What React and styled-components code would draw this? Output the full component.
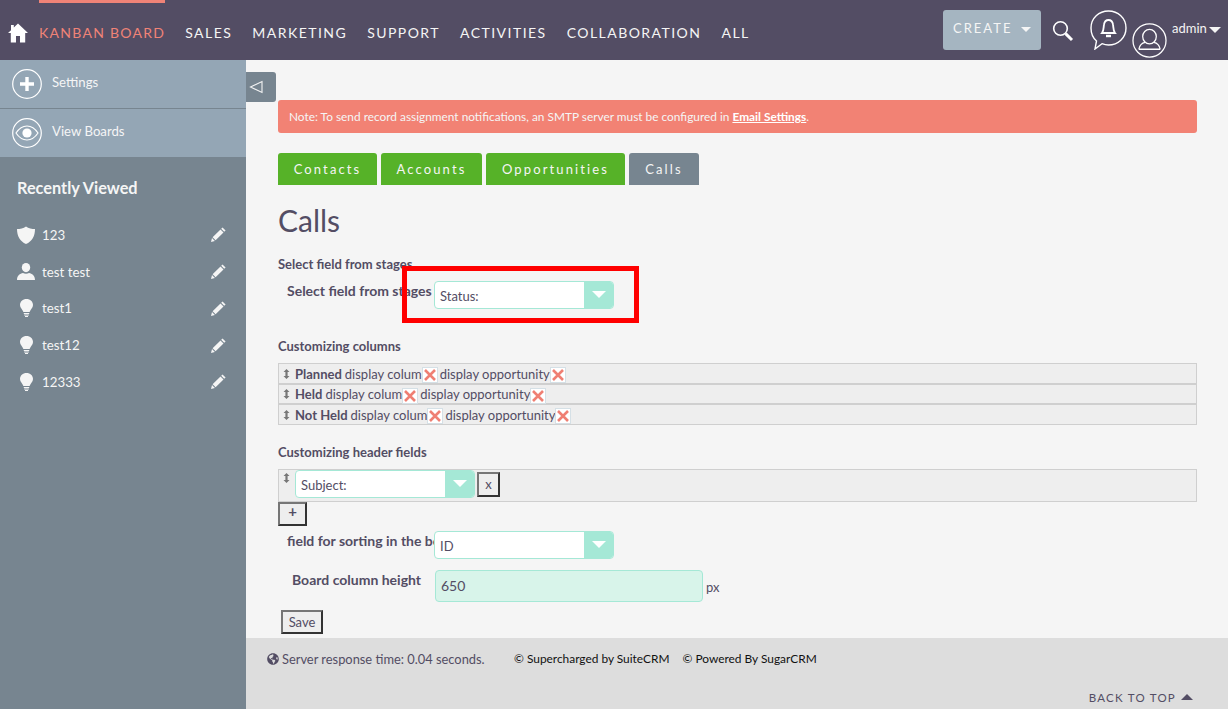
import React from 'react'
import styled, { createGlobalStyle } from 'styled-components'
import { FaGlobeAmericas } from 'react-icons/fa'

const GlobalStyle = createGlobalStyle`
html, body { margin: 0; padding: 0; height: 100%; overflow: hidden; }
body { font-family: Lato, "Open Sans", sans-serif; background: #f5f5f5; color: #534d64; }
* { box-sizing: border-box; }
`

const Page = styled.div`
display: flex;
flex-direction: column;
width: 1228px;
height: 709px;
overflow: hidden;
`

/* top bar */
const Header = styled.header`
flex: 0 0 60px;
display: flex;
align-items: flex-start;
background: #534d64;
position: relative;
`
const HomeLink = styled.a`
width: 39px;
height: 60px;
display: flex;
padding: 23px 0 0 8px;
`
const NavList = styled.nav`
display: flex;
height: 60px;
gap: 20px;
`
const NavItem = styled.a`
height: 60px;
font-size: 14px;
line-height: 17px;
letter-spacing: ${p => (p.$active ? '1.27px' : '1.46px')};
white-space: nowrap;
color: ${p => (p.$active ? '#f08377' : '#f5f5f5')};
border-top: ${p => (p.$active ? '3px solid #f08377' : '0')};
padding-top: ${p => (p.$active ? '21px' : '24px')};
`
const HeaderRight = styled.div`
margin-left: auto;
display: flex;
align-items: flex-start;
padding-top: 10px;
width: 285px;
`
const CreateButton = styled.button`
width: 98px;
height: 40px;
border: 0;
border-radius: 3px;
background: #a5b5c1;
color: #f5f5f5;
font-family: inherit;
font-size: 13px;
letter-spacing: 2px;
display: flex;
align-items: center;
padding: 0 0 4px 10px;
gap: 9px;
`
const SearchIcon = styled.svg`
margin: 10px 0 0 11px;
`
const BellIcon = styled.svg`
margin: 0 0 0 16px;
`
const UserIcon = styled.svg`
margin: 13px 0 0 5px;
`
const AdminLabel = styled.span`
margin: 10px 0 0 5px;
font-size: 13px;
line-height: 17px;
color: #f5f5f5;
display: flex;
align-items: center;
gap: 2px;
`
const Caret = styled.i`
display: inline-block;
width: 0;
height: 0;
margin-top: ${p => p.$top || 0}px;
border-left: ${p => p.$size || 5}px solid transparent;
border-right: ${p => p.$size || 5}px solid transparent;
border-top: ${p => p.$size || 5}px solid ${p => p.$color || '#f5f5f5'};
`

/* body */
const Body = styled.div`
flex: 1;
display: flex;
min-height: 0;
`
const Sidebar = styled.aside`
flex: 0 0 246px;
background: #778590;
`
const ActionList = styled.div`
background: #94a6b5;
height: 97px;
`
const ActionRow = styled.a`
display: flex;
height: ${p => (p.$last ? '48px' : '49px')};
padding: 9px 0 0 12px;
gap: 10px;
font-size: 13.2px;
line-height: 18px;
color: #f5f5f5;
border-bottom: ${p => (p.$last ? '0' : '1px solid #778590')};
span { padding-top: 4px; }
`
const RecentTitle = styled.h3`
margin: 0;
padding: 21px 0 0 17px;
font-size: 16.3px;
line-height: 19px;
font-weight: 700;
color: #f5f5f5;
`
const RecentList = styled.ul`
list-style: none;
margin: 19.6px 0 0;
padding: 0;
`
const RecentItem = styled.li`
height: 36.75px;
display: flex;
align-items: center;
color: #f5f5f5;
font-size: 13.3px;
padding: 0 20px 0 17px;
`
const RecentIcon = styled.span`
width: 25px;
display: flex;
padding-left: ${p => (p.$center ? '3px' : '0')};
`
const RecentName = styled.span`
flex: 1;
`

const Main = styled.main`
flex: 1;
min-width: 0;
display: flex;
flex-direction: column;
position: relative;
`
const CollapseTab = styled.button`
position: absolute;
left: 0;
top: 12px;
width: 30px;
height: 30px;
border: 0;
padding: 0 0 0 3px;
background: #778590;
border-radius: 0 3px 3px 0;
display: flex;
align-items: center;
`
const Content = styled.div`
flex: 1;
padding: 40px 31px 0 32px;
`
const Alert = styled.div`
height: 33px;
background: #f28274;
border-radius: 3px;
color: #f5f5f5;
font-size: 11.86px;
line-height: 33px;
padding-left: 11px;
a { color: #fff; font-weight: 700; text-decoration: underline; }
`
const Tabs = styled.div`
display: flex;
gap: 4px;
margin-top: 20px;
`
const Tab = styled.a`
width: ${p => p.$width}px;
height: 32px;
text-align: center;
border-radius: 3px 3px 0 0;
background: ${p => (p.$active ? '#778590' : '#56b228')};
color: #f5f5f5;
font-size: 13px;
line-height: 33px;
letter-spacing: 2.13px;
`
const Title = styled.h1`
margin: 15px 0 0;
font-size: 30px;
line-height: 40px;
font-weight: 400;
color: #534d64;
`
const SectionLabel = styled.h4`
margin: ${p => p.$top || 0}px 0 0;
font-size: 13px;
line-height: 15px;
font-weight: 700;
color: #534d64;
`
const FieldRow = styled.div`
display: flex;
align-items: flex-start;
margin-top: ${p => p.$top || 0}px;
position: relative;
`
const FieldLabel = styled.label`
width: 156px;
flex-shrink: 0;
padding-left: ${p => p.$indent || 9}px;
padding-top: ${p => p.$pad || 0}px;
font-size: 14px;
line-height: 16px;
font-weight: 700;
color: #534d64;
white-space: nowrap;
overflow: ${p => (p.$clip ? 'hidden' : 'visible')};
`
const SelectBox = styled.div`
width: ${p => p.$width || 180}px;
height: 28px;
flex-shrink: 0;
display: flex;
background: #fff;
border: 1px solid #a5e8d6;
border-radius: 4px;
overflow: hidden;
font-size: 13px;
color: #534d64;
`
const SelectText = styled.span`
flex: 1;
padding: 6px 0 0 5px;
line-height: 17px;
`
const SelectArrow = styled.span`
width: 29px;
background: #a5e8d6;
display: flex;
justify-content: center;
padding-top: 9px;
`
const HighlightBox = styled.div`
position: absolute;
left: 124px;
top: -15px;
width: 237px;
height: 57px;
border: 5px solid #ff0000;
pointer-events: none;
`
const SortRow = styled.div`
display: flex;
align-items: center;
height: ${p => p.$height || 21}px;
margin-top: ${p => p.$top || 0}px;
padding-left: 4px;
background: #eeeeee;
border: 1px solid #cfcfcf;
font-size: 13px;
color: #534d64;
white-space: nowrap;
b { font-weight: 700; margin: 0 3px 0 5px; }
`
const Grip = styled.svg`
flex-shrink: 0;
`
const RemoveBox = styled.span`
display: inline-flex;
align-items: center;
justify-content: center;
width: 16px;
height: 16px;
margin: 3px 2px 0 0;
background: #fff;
border: 1px solid #d5e0e6;
`
const PlainButton = styled.button`
display: block;
width: ${p => p.$width}px;
height: ${p => p.$height}px;
margin: ${p => p.$margin || 0};
padding: 0 0 ${p => p.$lift || 0}px;
background: #eeeeee;
border: 2px solid;
border-color: #767676 #333 #333 #767676;
font-family: inherit;
font-size: ${p => p.$size || 13}px;
font-weight: ${p => p.$weight || 400};
line-height: 1;
color: #534d64;
`
const HeaderFieldRow = styled(SortRow)`
align-items: flex-start;
padding-top: 0;
`
const HeaderGrip = styled.span`
padding-top: 3px;
margin-right: 5px;
display: flex;
`
const TextInput = styled.div`
width: 268px;
height: 32px;
background: #d8f4ea;
border: 1px solid #a5e8d6;
border-radius: 4px;
font-size: 14px;
line-height: 30px;
padding-left: 5px;
color: #534d64;
margin-left: 1px;
`
const Unit = styled.span`
font-size: 13px;
margin: 9px 0 0 3px;
`

/* footer */
const Footer = styled.footer`
flex: 0 0 71px;
background: #dddddd;
padding: 13px 0 0 21px;
position: relative;
display: flex;
align-items: flex-start;
font-size: 12.87px;
line-height: 16px;
`
const ServerTime = styled.span`
display: flex;
align-items: center;
gap: 3px;
width: 247px;
color: #534d64;
`
const Copy = styled.span`
font-size: 11.9px;
color: #111;
margin-right: 13px;
`
const BackToTop = styled.a`
position: absolute;
right: 35px;
top: 53px;
font-size: 11.5px;
line-height: 14px;
letter-spacing: 1.25px;
color: #534d64;
display: flex;
align-items: center;
gap: 5px;
`
const UpCaret = styled.i`
width: 0;
height: 0;
border-left: 6px solid transparent;
border-right: 6px solid transparent;
border-bottom: 6px solid #534d64;
margin-top: -2px;
`

const HomeIcon = () => (
  <svg width="20" height="20" viewBox="0 0 20 20" fill="#fff">
    <path d="M10 0.5 L20 10 L17.2 10 L17.2 19.5 L12 19.5 L12 13 L8 13 L8 19.5 L2.8 19.5 L2.8 10 L0 10 L3 7.2 L3 2 L5.8 2 L5.8 4.5 Z" />
  </svg>
)
const PlusCircle = () => (
  <svg width="30" height="30" viewBox="0 0 30 30">
    <circle cx="15" cy="15" r="14.3" fill="none" stroke="#fff" strokeWidth="1.2" />
    <path d="M15 8 V22 M8 15 H22" stroke="#fff" strokeWidth="3.4" />
  </svg>
)
const EyeCircle = () => (
  <svg width="30" height="30" viewBox="0 0 30 30">
    <circle cx="15" cy="15" r="14.3" fill="none" stroke="#fff" strokeWidth="1.2" />
    <path d="M4 15 C8 9 11 8 15 8 C19 8 22 9 26 15 C22 21 19 22 15 22 C11 22 8 21 4 15 Z" fill="none" stroke="#fff" strokeWidth="1.2" />
    <circle cx="15" cy="15" r="4.6" fill="#fff" />
  </svg>
)
const ShieldIcon = () => (
  <svg width="18" height="18" viewBox="0 0 18 18" fill="#f5f5f5">
    <path d="M9 0.5 C11.5 2.5 15 3 18 3 C18 10 15 15.5 9 18 C3 15.5 0 10 0 3 C3 3 6.5 2.5 9 0.5 Z" />
  </svg>
)
const PersonIcon = () => (
  <svg width="18" height="17" viewBox="0 0 18 17" fill="#f5f5f5">
    <ellipse cx="9" cy="4.6" rx="4.2" ry="4.6" />
    <path d="M0 17 C0 12.5 3 10.5 6 10 C7.5 11 10.5 11 12 10 C15 10.5 18 12.5 18 17 Z" />
  </svg>
)
const BulbIcon = () => (
  <svg width="13" height="18" viewBox="0 0 13 18" fill="#f5f5f5">
    <path d="M6.5 0 C10.2 0 13 2.6 13 6 C13 8.8 10.5 10.5 9.6 13 H3.4 C2.5 10.5 0 8.8 0 6 C0 2.6 2.8 0 6.5 0 Z" />
    <path d="M3.8 14 H9.2 V15 H3.8 Z M4.2 15.6 H8.8 V16.5 H4.2 Z M5 17 H8 V18 H5 Z" />
  </svg>
)
const PencilIcon = () => (
  <svg width="15" height="15" viewBox="0 0 15 15" fill="#f5f5f5">
    <path d="M11.5 0.4 L14.6 3.4 L13.2 4.8 L10.2 1.8 Z M9.5 2.5 L12.5 5.5 L4.6 13.2 L1.6 10.2 Z M1 11 L3.9 13.9 L0 15 Z" />
  </svg>
)
const SelectCaret = () => <Caret $size={7} $color="#fff" />
const GripIcon = () => (
  <Grip width="7" height="10" viewBox="0 0 7 10" fill="#777">
    <path d="M3.5 0 L6.5 3 H4.6 V7 H6.5 L3.5 10 L0.5 7 H2.4 V3 H0.5 Z" />
  </Grip>
)
const RemoveIcon = () => (
  <RemoveBox>
    <svg width="12" height="12" viewBox="0 0 12 12">
      <path d="M1 1 L11 11 M11 1 L1 11" stroke="#ef7f73" strokeWidth="2.6" />
    </svg>
  </RemoveBox>
)

const recent = [
  { name: '123', icon: <ShieldIcon /> },
  { name: 'test test', icon: <PersonIcon /> },
  { name: 'test1', icon: <BulbIcon />, center: true },
  { name: 'test12', icon: <BulbIcon />, center: true },
  { name: '12333', icon: <BulbIcon />, center: true },
]
const navItems = ['SALES', 'MARKETING', 'SUPPORT', 'ACTIVITIES', 'COLLABORATION', 'ALL']

export default function App() {
  return (
    <Page>
      <GlobalStyle />
      <Header>
        <HomeLink><HomeIcon /></HomeLink>
        <NavList>
          <NavItem $active>KANBAN BOARD</NavItem>
          {navItems.map(item => <NavItem key={item}>{item}</NavItem>)}
        </NavList>
        <HeaderRight>
          <CreateButton>CREATE <Caret $size={5} $top={2} /></CreateButton>
          <SearchIcon width="22" height="22" viewBox="0 0 22 22" fill="none" stroke="#fff">
            <circle cx="8.5" cy="8.5" r="6.8" strokeWidth="1.6" />
            <path d="M13.6 13.6 L20 20" strokeWidth="3" />
          </SearchIcon>
          <BellIcon width="37" height="40" viewBox="0 0 37 40" fill="none" stroke="#fff" strokeWidth="1.4">
            <path d="M18.5 1 C28 1 36 8 36 18 C36 28 28 35 18.5 35 C16 35 14 34.5 12 33.7 L5 39 L6.5 31 C3 28 1 23.5 1 18 C1 8 9 1 18.5 1 Z" />
            <path d="M12 23 C14 20.5 13.5 17 14 14.5 C14.5 11.5 16.5 10 18.5 10 C20.5 10 22.5 11.5 23 14.5 C23.5 17 23 20.5 25 23 Z" strokeWidth="1.8" />
            <path d="M16 26 H21" strokeWidth="2.4" />
          </BellIcon>
          <UserIcon width="35" height="35" viewBox="0 0 36 36" fill="none" stroke="#fff" strokeWidth="1.3">
            <circle cx="18" cy="18" r="17" />
            <ellipse cx="18" cy="14" rx="7" ry="7.5" />
            <path d="M7 27 C8 22 11 20.5 13.5 20 M29 27 C28 22 25 20.5 22.5 20 M7 27 H29" />
          </UserIcon>
          <AdminLabel>admin<Caret $size={6.5} $top={3} /></AdminLabel>
        </HeaderRight>
      </Header>
      <Body>
        <Sidebar>
          <ActionList>
            <ActionRow><PlusCircle /><span>Settings</span></ActionRow>
            <ActionRow $last><EyeCircle /><span>View Boards</span></ActionRow>
          </ActionList>
          <RecentTitle>Recently Viewed</RecentTitle>
          <RecentList>
            {recent.map(r => (
              <RecentItem key={r.name}>
                <RecentIcon $center={r.center}>{r.icon}</RecentIcon>
                <RecentName>{r.name}</RecentName>
                <PencilIcon />
              </RecentItem>
            ))}
          </RecentList>
        </Sidebar>
        <Main>
          <CollapseTab>
            <svg width="14" height="14" viewBox="0 0 14 14" fill="none" stroke="#f5f5f5" strokeWidth="1.1">
              <path d="M13 1.5 V12.5 L1.5 7 Z" />
            </svg>
          </CollapseTab>
          <Content>
            <Alert>Note: To send record assignment notifications, an SMTP server must be configured in <a>Email Settings</a>.</Alert>
            <Tabs>
              <Tab $width={99}>Contacts</Tab>
              <Tab $width={101}>Accounts</Tab>
              <Tab $width={139}>Opportunities</Tab>
              <Tab $width={70} $active>Calls</Tab>
            </Tabs>
            <Title>Calls</Title>
            <SectionLabel $top={17}>Select field from stages</SectionLabel>
            <FieldRow $top={9}>
              <FieldLabel $pad={2}>Select field from stages</FieldLabel>
              <SelectBox>
                <SelectText>Status:</SelectText>
                <SelectArrow><SelectCaret /></SelectArrow>
              </SelectBox>
              <HighlightBox />
            </FieldRow>
            <SectionLabel $top={30}>Customizing columns</SectionLabel>
            <SortRow $top={9}><GripIcon /><b>Planned</b>display colum<RemoveIcon />display opportunity<RemoveIcon /></SortRow>
            <SortRow $height={20}><GripIcon /><b>Held</b>display colum<RemoveIcon />display opportunity<RemoveIcon /></SortRow>
            <SortRow><GripIcon /><b>Not Held</b>display colum<RemoveIcon />display opportunity<RemoveIcon /></SortRow>
            <SectionLabel $top={20}>Customizing header fields</SectionLabel>
            <HeaderFieldRow $top={9} $height={33}>
              <HeaderGrip><GripIcon /></HeaderGrip>
              <SelectBox>
                <SelectText>Subject:</SelectText>
                <SelectArrow><SelectCaret /></SelectArrow>
              </SelectBox>
              <PlainButton $width={23} $height={25} $margin="2px 0 0 2px">x</PlainButton>
            </HeaderFieldRow>
            <PlainButton $width={29} $height={24} $size={15} $weight={700} $lift={6}>+</PlainButton>
            <FieldRow $top={5}>
              <FieldLabel $pad={2} $clip>field for sorting in the board</FieldLabel>
              <SelectBox>
                <SelectText>ID</SelectText>
                <SelectArrow><SelectCaret /></SelectArrow>
              </SelectBox>
            </FieldRow>
            <FieldRow $top={11}>
              <FieldLabel $indent={14} $pad={2}>Board column height</FieldLabel>
              <TextInput>650</TextInput>
              <Unit>px</Unit>
            </FieldRow>
            <PlainButton $width={42} $height={24} $margin="8px 0 0 3px">Save</PlainButton>
          </Content>
          <Footer>
            <ServerTime><FaGlobeAmericas size={12} color="#534d64" />Server response time: 0.04 seconds.</ServerTime>
            <Copy>© Supercharged by SuiteCRM</Copy>
            <Copy>© Powered By SugarCRM</Copy>
            <BackToTop>BACK TO TOP <UpCaret /></BackToTop>
          </Footer>
        </Main>
      </Body>
    </Page>
  )
}
